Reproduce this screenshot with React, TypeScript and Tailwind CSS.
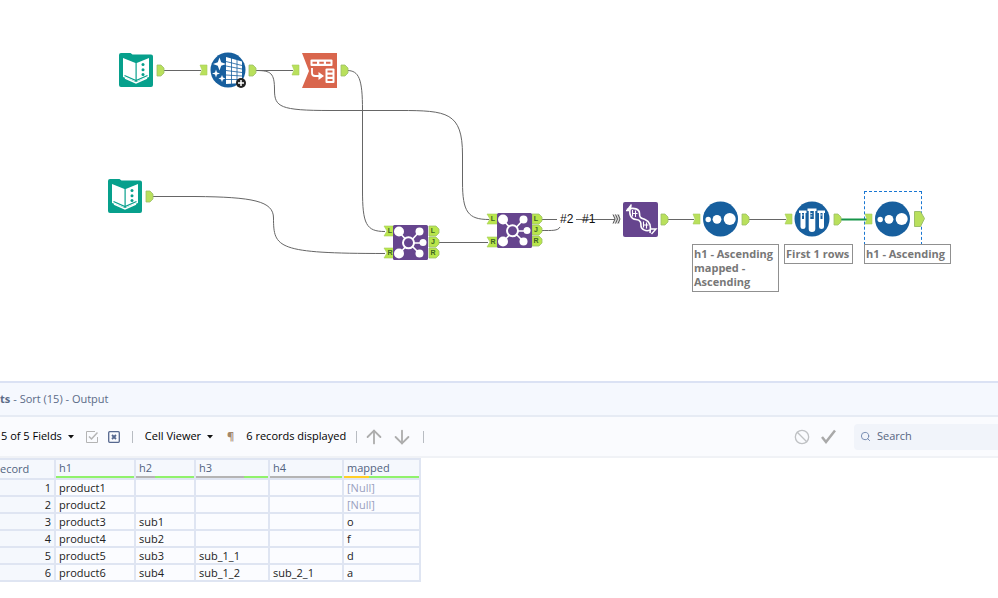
import { ReactNode } from "react";
import { ArrowDown, ArrowUp, Ban, Search } from "lucide-react";

type PortProps = {
  x: number;
  y: number;
  label?: string;
};

type AnnotationProps = {
  position: string;
  lines: string[];
};

type Column = {
  name: string;
  width: string;
  rest: string;
  filled: number;
};

const columns: Column[] = [
  { name: "h1", width: "w-[80px]", rest: "bg-[#b4b4b4]", filled: 100 },
  { name: "h2", width: "w-[60px]", rest: "bg-[#b4b4b4]", filled: 67 },
  { name: "h3", width: "w-[74px]", rest: "bg-[#b4b4b4]", filled: 33 },
  { name: "h4", width: "w-[74px]", rest: "bg-[#b4b4b4]", filled: 17 },
  { name: "mapped", width: "w-[77px]", rest: "bg-[#ffcf26]", filled: 67 },
];

const records = [
  ["product1", "", "", "", "[Null]"],
  ["product2", "", "", "", "[Null]"],
  ["product3", "sub1", "", "", "o"],
  ["product4", "sub2", "", "", "f"],
  ["product5", "sub3", "sub_1_1", "", "d"],
  ["product6", "sub4", "sub_1_2", "sub_2_1", "a"],
];

function InPort({ x, y }: PortProps) {
  return <path d={`M${x} ${y - 5}h7v10h-7l2-5z`} fill="#b9e05c" stroke="#a6cc5a" strokeWidth="0.6" />;
}

function OutPort({ x, y }: PortProps) {
  return <path d={`M${x} ${y - 5}h4l3 3v5l-3 3h-4z`} fill="#b9e05c" stroke="#9dbf6a" strokeWidth="0.8" />;
}

function NamedIn({ x, y, label }: PortProps) {
  return (
    <g>
      <path d={`M${x} ${y - 5}h10v10h-10l3-5z`} fill="#b9e64c" stroke="#a6cc5a" strokeWidth="0.6" />
      <text x={x + 6} y={y + 2} textAnchor="middle" fontSize="7" fontWeight="bold" fill="#3c6424">{label}</text>
    </g>
  );
}

function NamedOut({ x, y, label }: PortProps) {
  return (
    <g>
      <path d={`M${x} ${y - 5}h7l3 3v4l-3 3h-7z`} fill="#b9e64c" stroke="#9dbf6a" strokeWidth="0.8" />
      <text x={x + 4} y={y + 2} textAnchor="middle" fontSize="7" fontWeight="bold" fill="#3c6424">{label}</text>
    </g>
  );
}

function Tool({ position, children }: { position: string; children: ReactNode }) {
  return (
    <svg className={`absolute h-[36px] w-[36px] overflow-visible ${position}`} viewBox="0 0 36 36" fill="none">
      {children}
    </svg>
  );
}

function InputTool({ position }: { position: string }) {
  return (
    <Tool position={position}>
      <path d="M3 1h9.500l2 1.500H33q2 0 2 2V33q0 2-2 2H3q-2 0-2-2V3q0-2 2-2z" fill="#07a08c" />
      <path d="M5 6l12.500 5v18.500L5 25zM18.700 11L31 6v19l-12.300 4.500z" fill="#fff" />
      <path d="M6.500 23.500L18 28.500l11.500-5" stroke="#07a08c" strokeWidth="1.200" />
      <path d="M7 26l11 5 11-5" stroke="#fff" strokeWidth="1.400" />
      <circle cx="25" cy="12.500" r="1.500" fill="#07a08c" />
      <circle cx="25" cy="17.700" r="1.500" fill="#07a08c" />
      <circle cx="25" cy="22.500" r="1.500" fill="#07a08c" />
    </Tool>
  );
}

function CleanseTool({ position }: { position: string }) {
  return (
    <Tool position={position}>
      <circle cx="18" cy="18" r="17.500" fill="#175f9e" />
      <path d="M16 5l16 4.500v21.500L16 32z" fill="#fff" />
      <path d="M16 9.500l16 4M16 14l16 3M16 18.500l16 2M16 23l16 1M16 27.500h16M21.500 6v26M27 8v24" stroke="#175f9e" strokeWidth=".8" />
      <path d="M9.500 5.500l1.700 4.800 4.800 1.700-4.800 1.700-1.700 4.800-1.700-4.800L3 12l4.800-1.700zM6 17.500l1 3 3 1-3 1-1 3-1-3-3-1 3-1zM12 23l1 2.500 2.500 1-2.500 1-1 2.500-1-2.500-2.500-1 2.500-1z" fill="#fff" />
      <circle cx="31" cy="31" r="5" fill="#222" />
      <path d="M31 28v6M28 31h6" stroke="#fff" strokeWidth="1.500" />
    </Tool>
  );
}

function TransposeTool({ position }: { position: string }) {
  return (
    <Tool position={position}>
      <path d="M0 0h35v35H0l7-17z" fill="#d9664d" />
      <rect x="8.500" y="6.500" width="22" height="6.500" rx="1" fill="#fff" />
      <path d="M10.500 9.800h4.500M17.300 9.800h4.500M24 9.800h4.500" stroke="#d9664d" strokeWidth="2" />
      <rect x="23.500" y="15.500" width="9" height="14.500" rx="1" fill="#fff" />
      <path d="M25.500 18.500h5M25.500 22.800h5M25.500 27h5" stroke="#d9664d" strokeWidth="2" />
      <path d="M10 15v5q0 3 3 3h5" stroke="#fff" strokeWidth="1.800" />
      <path d="M16.500 19l5.500 4-5.500 4z" fill="#fff" />
    </Tool>
  );
}

function JoinTool({ position }: { position: string }) {
  return (
    <Tool position={position}>
      <rect width="35" height="35" rx="1.500" fill="#66458e" />
      <path d="M6 7l10 11L6 29M27 6L16 18l11 11M16 18h14" stroke="#fff" strokeWidth="1.600" />
      <circle cx="6" cy="6.500" r="5" fill="#fff" />
      <circle cx="6" cy="28.500" r="5" fill="#fff" />
      <circle cx="26.500" cy="6.500" r="4" fill="#fff" />
      <circle cx="30" cy="17.500" r="3.500" fill="#fff" />
      <circle cx="26.500" cy="28.500" r="4" fill="#fff" />
      <circle cx="15.500" cy="17.800" r="5.500" fill="#66458e" stroke="#fff" strokeWidth="2" />
    </Tool>
  );
}

function UnionTool({ position }: { position: string }) {
  return (
    <Tool position={position}>
      <rect width="35" height="35" rx="2" fill="#66458e" />
      <path d="M8 4C5 12 8 17 13 17.500S18 21 18 24 23 30 27 28" stroke="#fff" strokeWidth="1.600" />
      <path d="M4 7.500C11 5 16.500 7 16.500 11.500S18 16 22 17.500 28.500 23 27 31" stroke="#fff" strokeWidth="1.600" />
      <path d="M4 8.500L8.500 2.500M3 8.500h3M27 27h6l-4.500 5" stroke="#fff" strokeWidth="1.400" />
      <path d="M9.500 8v6.500M12.500 8.500v6.500M9.500 11.500h5M20.500 19.500v6M23.500 20.500v6M20.500 23h5" stroke="#fff" strokeWidth="1.100" />
    </Tool>
  );
}

function SortTool({ position }: { position: string }) {
  return (
    <Tool position={position}>
      <circle cx="18.500" cy="18" r="17.500" fill="#175f9e" />
      <circle cx="6.200" cy="18.500" r="2.700" fill="#fff" />
      <circle cx="15" cy="18.300" r="4.400" fill="#fff" />
      <circle cx="27.700" cy="18" r="6" fill="#fff" />
    </Tool>
  );
}

function SampleTool({ position }: { position: string }) {
  return (
    <Tool position={position}>
      <circle cx="18" cy="18" r="17.500" fill="#175f9e" />
      <path d="M5 9.500h7.500V12h-1v14q0 2-2.500 2t-2.500-2V12H5zM23.500 9.500H31V12h-1v14q0 2-2.500 2T25 26V12h-1.500zM13.500 7.500h9V10h-1.200v18q0 3-3.300 3t-3.300-3V10h-1.200z" fill="#fff" />
      <path d="M8 12h2v6H8zM26.500 12h2v6h-2zM16.300 10h3.500v8h-3.500z" fill="#175f9e" />
      <path d="M8 14h1.500M26.500 14H28M16.300 12.500h2M16.300 15h2" stroke="#fff" strokeWidth="0.800" />
    </Tool>
  );
}

function Annotation({ position, lines }: AnnotationProps) {
  return (
    <div className={`absolute border border-[#909090] bg-white px-px py-0.5 text-[11px] leading-[14px] font-bold whitespace-nowrap text-[#777] ${position}`}>
      {lines.map((line) => (
        <div key={line}>{line}</div>
      ))}
    </div>
  );
}

function Canvas() {
  return (
    <main className="relative min-h-[381px] flex-1 overflow-hidden bg-white">
      <div className="absolute top-[191px] left-[864px] h-[54px] w-[58px] border border-dashed border-[#1976d2]"></div>
      <svg className="absolute top-0 left-0 h-[381px] w-[998px] font-['Liberation_Sans',sans-serif]" viewBox="0 0 998 381" fill="none">
        <g stroke="#666" strokeWidth="1">
          <path d="M163 70.500h38M256 70.500h37M438 242.500h50M667 219.500h27M748 219.500h38M541 219.500h16M576 219.500h39" />
          <path d="M256 70.500C271 70.500 274.500 73 274.500 90C274.500 107 280 110.500 330 110.500H400C447 110.500 462.500 112 462.500 155V182C462.500 212 468 219.500 489 219.500" />
          <path d="M347 70.500C359 70.500 362.500 79 362.500 110V190C362.500 224 366 231.500 385 231.500" />
          <path d="M151 196.500H195C253 197 273.500 201 273.500 218C273.500 248 277 253.500 385 253.500" />
          <path d="M541 230.500C552 230.500 558 231 560 227" />
        </g>
        <path d="M840 219.500h28" stroke="#169449" strokeWidth="2" />
        <OutPort x={157} y={70} />
        <InPort x={200} y={70} />
        <OutPort x={249} y={70} />
        <InPort x={292} y={70} />
        <OutPort x={341} y={70} />
        <OutPort x={146} y={196} />
        <NamedIn x={384} y={231} label="L" />
        <NamedIn x={384} y={253} label="R" />
        <NamedOut x={429} y={231} label="L" />
        <NamedOut x={429} y={242} label="J" />
        <NamedOut x={429} y={253} label="R" />
        <NamedIn x={487} y={219} label="L" />
        <NamedIn x={487} y={242} label="R" />
        <NamedOut x={532} y={219} label="L" />
        <NamedOut x={532} y={230} label="J" />
        <NamedOut x={532} y={241} label="R" />
        <path d="M613 214.500h7v9h-7l2-4.500z" fill="#ddd" />
        <path d="M613 214.500l2 4.500-2 4.500M615.500 214.500l2 4.500-2 4.500M618 214.500l2 4.500-2 4.500" stroke="#555" />
        <OutPort x={661} y={219} />
        <InPort x={693} y={219} />
        <OutPort x={742} y={219} />
        <InPort x={785} y={219} />
        <OutPort x={834} y={219} />
        <InPort x={865} y={219} />
        <path d="M914.500 211.500h6l4 7-4 8h-6z" fill="#b9e05c" stroke="#9dbf6a" />
        <text x="560" y="223" fontSize="12" fill="#111">#2</text>
        <text x="582" y="223" fontSize="12" fill="#111">#1</text>
      </svg>
      <InputTool position="top-[52px] left-[118px]" />
      <CleanseTool position="top-[52px] left-[210px]" />
      <TransposeTool position="top-[53px] left-[302px]" />
      <InputTool position="top-[178px] left-[107px]" />
      <JoinTool position="top-[225px] left-[393px]" />
      <JoinTool position="top-[213px] left-[497px]" />
      <UnionTool position="top-[202px] left-[623px]" />
      <SortTool position="top-[201px] left-[702px]" />
      <SampleTool position="top-[201px] left-[794px]" />
      <SortTool position="top-[201px] left-[874px]" />
      <Annotation position="top-[244px] left-[692px] w-[87px]" lines={["h1 - Ascending", "mapped -", "Ascending"]} />
      <Annotation position="top-[244px] left-[784px] w-[69px]" lines={["First 1 rows"]} />
      <Annotation position="top-[244px] left-[864px] w-[87px]" lines={["h1 - Ascending"]} />
    </main>
  );
}

function Caret() {
  return (
    <svg className="h-[4px] w-[6px]" viewBox="0 0 6 4">
      <path d="M0 0h6L3 3.500z" fill="#111" />
    </svg>
  );
}

function Divider() {
  return <span className="h-3 w-px bg-[#b8bcc2]"></span>;
}

function Toolbar() {
  return (
    <div className="flex h-[41px] items-center border-b-2 border-[#f0f2f6] bg-[#fafbfe] pl-px text-black">
      <button className="flex items-center gap-[6px]">
        5 of 5 Fields
        <Caret />
      </button>
      <button aria-label="Select all" className="ml-3">
        <svg className="h-3 w-3" viewBox="0 0 12 12" fill="none" stroke="#b4b4b4">
          <path d="M11.500 6v5.500H.5V.5H9" />
          <path d="M3 5.500l2.500 2.500 6-6.500" strokeWidth="1.500" />
        </svg>
      </button>
      <button aria-label="Deselect all" className="mr-3 ml-[10px]">
        <svg className="h-3 w-3" viewBox="0 0 12 12" fill="none" stroke="#56688f" strokeWidth="1.300">
          <rect x=".7" y=".7" width="10.600" height="10.600" rx="1" />
          <path d="M4 4l4 4M8 4l-4 4" strokeWidth="1.800" />
        </svg>
      </button>
      <Divider />
      <button className="ml-3 flex items-center gap-[6px]">
        Cell Viewer
        <Caret />
      </button>
      <button className="ml-[14px] font-bold text-[#a3876b]">¶</button>
      <span className="mr-[10px] ml-3">6 records displayed</span>
      <Divider />
      <button aria-label="Previous" className="ml-[6px]">
        <ArrowUp size={22} color="#adadad" strokeWidth={2} />
      </button>
      <button aria-label="Next" className="mr-[10px] ml-[6px]">
        <ArrowDown size={22} color="#adadad" strokeWidth={2} />
      </button>
      <Divider />
      <button aria-label="Cancel" className="ml-auto">
        <Ban size={16} color="#bfc1c4" />
      </button>
      <button aria-label="Apply" className="mr-[18px] ml-[11px]">
        <svg className="h-[15px] w-[15px]" viewBox="0 0 15 15" fill="none" stroke="#a9a9a9">
          <path d="M1 8l4 5L14 1.500" strokeWidth="2.500" />
        </svg>
      </button>
      <label className="flex h-[26px] w-36 items-center gap-[6px] rounded-l bg-[#f1f4fa] pl-[6px]">
        <Search size={11} color="#7085ad" />
        <input type="text" placeholder="Search" className="w-24 outline-none placeholder:text-[#56657f]" />
      </label>
    </div>
  );
}

function Results() {
  return (
    <table className="w-[421px] table-fixed border-separate border-spacing-0 bg-[#fbfcff]">
      <thead>
        <tr className="text-left text-[#51637f]">
          <th className="h-[22px] w-[56px] border-y-2 border-r-2 border-[#dfe5f2] bg-[#f5f8fd] p-0 font-normal">ecord</th>
          {columns.map((col) => (
            <th key={col.name} className={`h-[22px] border-y-2 border-r-2 border-[#dfe5f2] bg-[#f5f8fd] p-0 font-normal ${col.width}`}>
              <div className="h-[16px] pl-[3px] leading-[16px]">{col.name}</div>
              <div className={`flex h-[2px] justify-end ${col.rest}`}>
                <div className="bg-[#90f26c]" style={{ width: `${col.filled}%` }}></div>
              </div>
            </th>
          ))}
        </tr>
      </thead>
      <tbody>
        {records.map((record, i) => (
          <tr key={i} className="text-[#222]">
            <td className="h-[17px] border-r-2 border-b-2 border-[#dfe5f2] bg-[#f5f8fd] p-0 pr-[3px] text-right leading-[15px]">{i + 1}</td>
            {record.map((cell, j) => (
              <td key={j} className={`h-[17px] border-r-2 border-b-2 border-[#dfe5f2] p-0 pl-[3px] leading-[15px] ${cell === "[Null]" ? "text-[#9a9fc0]" : ""}`}>
                {cell}
              </td>
            ))}
          </tr>
        ))}
      </tbody>
    </table>
  );
}

export default function App() {
  return (
    <div className="flex min-h-screen flex-col bg-white font-['Open_Sans','Noto_Sans',sans-serif] text-[11px]">
      <Canvas />
      <section className="border-t-2 border-[#dbe2f4] pb-4">
        <h2 className="flex h-[34px] items-center gap-[3px] border-b-2 border-[#e6ebf4] bg-[#f5f8fe] text-[#5b6b87]">
          <b>ts</b>
          <span>- Sort (15) - Output</span>
        </h2>
        <Toolbar />
        <Results />
      </section>
    </div>
  );
}
